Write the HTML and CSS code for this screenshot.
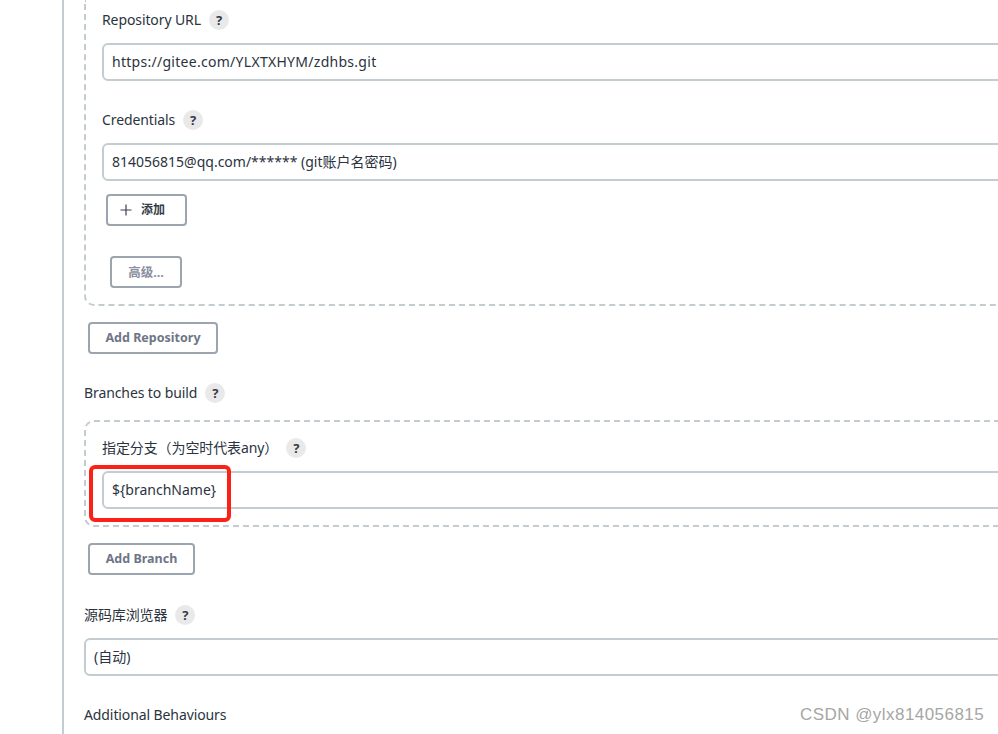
FILE: index.html
```html
<!DOCTYPE html>
<html lang="zh">
<head>
<meta charset="utf-8">
<title>Jenkins Git</title>
<link rel="stylesheet" href="styles.css">
</head>
<body>
<main class="section">
  <div class="repo-box">
    <div class="label-row"><span>Repository URL</span><span class="help">?</span></div>
    <div class="input url">https://gitee.com/YLXTXHYM/zdhbs.git</div>
    <div class="label-row cred"><span>Credentials</span><span class="help">?</span></div>
    <div class="input">814056815@qq.com/****** (git账户名密码)</div>
    <button class="btn add"><svg class="plus" viewBox="0 0 12 12" width="12" height="12"><path d="M6 .5v11M.5 6h11" fill="none" stroke="#3a4150" stroke-width="1.2"/></svg><span>添加</span></button>
    <button class="btn adv">高级...</button>
  </div>
  <button class="btn add-repo">Add Repository</button>
  <div class="label-row top"><span>Branches to build</span><span class="help">?</span></div>
  <div class="branch-box">
    <div class="label-row small"><span>指定分支（为空时代表any）</span><span class="help">?</span></div>
    <div class="input">${branchName}</div>
  </div>
  <button class="btn add-branch">Add Branch</button>
  <div class="label-row browser"><span>源码库浏览器</span><span class="help">?</span></div>
  <div class="input select">(自动)</div>
  <div class="label-row additional"><span>Additional Behaviours</span></div>
</main>
<div class="highlight"></div>
<div class="watermark">CSDN @ylx814056815</div>
</body>
</html>
```
FILE: styles.css
```css
html, body {
  margin: 0;
  height: 734px;
  overflow: hidden;
  background: #fff;
}
body {
  position: relative;
  font-family: "Noto Sans", "Noto Sans CJK SC", sans-serif;
  font-size: 14px;
  color: #2b3340;
}
.section {
  margin-left: 62px;
  width: 936px;
  height: 734px;
  box-sizing: border-box;
  border-left: 2px solid #c3ccd1;
  padding-left: 20px;
  overflow: hidden;
}
.repo-box {
  width: 1000px;
  height: 306px;
  box-sizing: border-box;
  padding: 8px 0 0 16px;
  border-left: 2px dashed #c3ccd1;
  border-bottom: 2px dashed #c3ccd1;
  border-bottom-left-radius: 10px;
}
.label-row {
  display: flex;
  align-items: center;
  gap: 8px;
  height: 24px;
  line-height: 24px;
  letter-spacing: -.1px;
}
.help {
  width: 20px;
  height: 20px;
  border-radius: 50%;
  background: #e9e9ea;
  color: #333a45;
  font-size: 13px;
  font-weight: 700;
  line-height: 20px;
  text-align: center;
}
.input {
  box-sizing: border-box;
  height: 38px;
  line-height: 34px;
  margin-top: 11px;
  padding-left: 8px;
  border: 2px solid #c3ccd1;
  border-radius: 6px;
  background: #fff;
  color: #2b3340;
}
.url { letter-spacing: .28px; }
.cred { margin-top: 27px; }
.btn {
  display: flex;
  align-items: center;
  justify-content: center;
  box-sizing: border-box;
  height: 32px;
  padding: 0 0 2px;
  background: #fff;
  border: 2px solid #9aa5af;
  border-radius: 4px;
  font: 700 12.5px "Noto Sans", "Noto Sans CJK SC", sans-serif;
  color: #6e7587;
}
.add {
  width: 81px;
  margin: 13px 0 0 4px;
  padding-right: 8px;
  gap: 9px;
  color: #333a45;
  font-size: 12px;
}
.plus { margin-top: 2px; }
.adv {
  width: 72px;
  margin: 30px 0 0 8px;
  color: #8a909e;
}
.add-repo {
  width: 130px;
  margin: 16px 0 0 4px;
}
.top { margin-top: 27px; }
.branch-box {
  width: 1000px;
  height: 107px;
  box-sizing: border-box;
  margin-top: 15px;
  padding: 14px 0 0 16px;
  border-top: 2px dashed #c3ccd1;
  border-left: 2px dashed #c3ccd1;
  border-bottom: 2px dashed #c3ccd1;
  border-radius: 10px 0 0 10px;
}
.branch-box .input { margin-top: 11px; }
.add-branch {
  width: 107px;
  margin: 16px 0 0 4px;
}
.browser { margin-top: 28px; }
.select { width: 1000px; margin-top: 11px; }
.additional { margin-top: 27px; }
.highlight {
  position: absolute;
  left: 89px;
  top: 465px;
  width: 142px;
  height: 57px;
  box-sizing: border-box;
  border: 4px solid #fb2116;
  border-radius: 6px;
}
.watermark {
  position: absolute;
  left: 800px;
  top: 704px;
  font-family: "Liberation Sans", sans-serif;
  font-size: 17px;
  line-height: 22px;
  color: #a6a6a6;
  letter-spacing: .45px;
  white-space: nowrap;
}
```
